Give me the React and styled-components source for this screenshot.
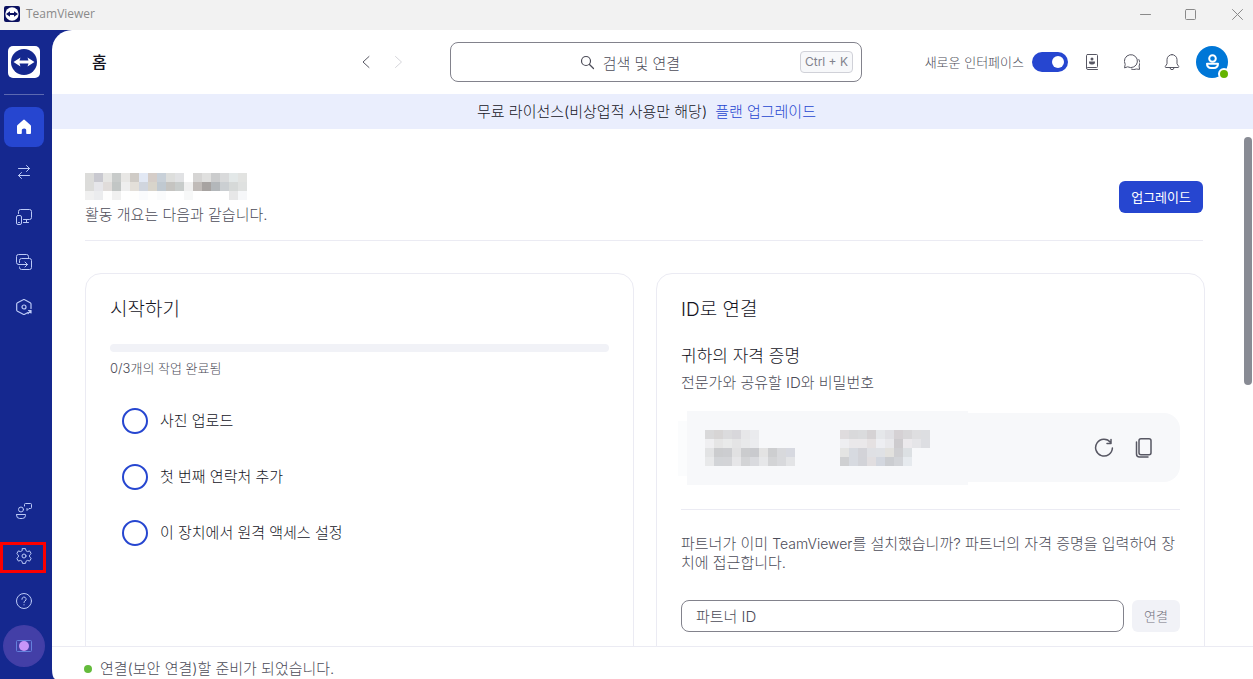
import React, { useState } from 'react';
import styled, { createGlobalStyle, css } from 'styled-components';

const NAME_MASK = [
  'dcdcda c9c9d0 e6e6e4 c8cbca e8e7e5 cfcbc6 e2e8f4 d5cdc8 c8d0d8 dddedc e1e2e4 ffffff d6d5d4 e0e0df cbcccd d9dadb e3e8e8 e2e3e1',
  'dcdcda e6e6ea e0dcda c2c6c5 eeeeee e3dfd9 d0d5de d8d4cb c0c9d1 c5c4c1 c8cccb f0f0f0 c0bbb8 a7a3a1 b3b7ba cbcfd2 d6d9d8 dfe1e0',
  'f0f0f0 ebecee fdfdfd f0f0f0 ffffff fefefd fafbfd fefefe fafbfc ffffff ffffff f7f8f8 ffffff ffffff ffffff ffffff e7e7e8 f6f7f9',
];

const ID_MASK = [
  'd9d9da d7d5d5 dbdbdd d8d7db e7e7e9 eaebee f7f8fa f7f8fa f7f8fa f7f8fa',
  'efeff1 e5e5e5 e9eaea e4e4e5 e8e9ea ebecef f7f8fa f7f8fa f7f8fa f7f8fa',
  'e2e3e4 cbccce cccdd0 e1e1e2 cbccce c9cace e3e3e3 cdced0 d8d9dc d7d9e0',
  'e8e9ea d2d4d7 d3d4d7 e6e6e8 d3d4d6 d9dade e6e7e9 d3d4d6 d8d9dc e3e4e6',
];

const PASSWORD_MASK = [
  'dfdcde d9d9db dadbdd d5d2d4 e5e7ea e0e0e4 d5d1d4 d8d7d9 dedee0 dddee1',
  'eeeef1 eae8ea eae8ea e5e1e2 edeef2 e8e8eb cdcbce ebe9ec e5e5e8 dddee2',
  'e4e4e3 d7dae0 d3d3d8 dfe0e4 dfe1e5 e2e1de cfcfd2 dce0e3 f7f8fa f7f8fa',
  'cfd0d2 d7dae0 d2d3d8 e1dee0 d3d7df cbcdd1 d2d4d8 e6eaee f7f8fa f7f8fa',
];

const STEPS = ['사진 업로드', '첫 번째 연락처 추가', '이 장치에서 원격 액세스 설정'];

const Line = ({ size = 16, children, ...rest }) => (
  <svg
    width={size}
    height={size}
    viewBox={`0 0 ${size} ${size}`}
    fill="none"
    stroke="currentColor"
    strokeLinecap="round"
    strokeLinejoin="round"
    aria-hidden="true"
    {...rest}
  >
    {children}
  </svg>
);

const HomeIcon = () => (
  <svg width="16" height="16" viewBox="0 0 16 16" fill="currentColor" aria-hidden="true">
    <path d="M7.2.9a1.2 1.2 0 0 1 1.6 0l5.6 5c.4.3.6.8.6 1.3v6.6c0 .8-.5 1.2-1.2 1.2h-2.6c-.6 0-1-.4-1-1v-2.7c0-1-.8-1.8-1.8-1.8H8c-1.2 0-2.2.8-2.2 1.8V14c0 .6-.4 1-1 1H2.200C1.500 15 1 14.600 1 13.800V7.200c0-.5.2-1 .6-1.300z" />
  </svg>
);

const TransferIcon = () => (
  <Line>
    <path d="M2.500 4.500h11M10.500 1.500l3 3-3 3M13.500 11.500h-11M5.500 8.500l-3 3 3 3" />
  </Line>
);

const DevicesIcon = () => (
  <Line>
    <path d="M2.500 4.500v-2a2 2 0 0 1 2-2h9a2 2 0 0 1 2 2v6a2 2 0 0 1-2 2h-6M10.500 10.500v3M7.500 13.500h5M2.500 13.500h1" />
    <rect x=".5" y="6.500" width="5" height="9" rx="1.500" />
  </Line>
);

const SessionsIcon = () => (
  <Line>
    <path d="M2.500 10.500a2 2 0 0 1-2-2v-6a2 2 0 0 1 2-2h8a2 2 0 0 1 2 2v1" />
    <path d="M3.500 8.500v-2a2 2 0 0 1 2-2h8a2 2 0 0 1 2 2v7a2 2 0 0 1-2 2h-8a2 2 0 0 1-2-2v-.500M2.500 10.500h9M9 8l2.500 2.500L9 13" />
  </Line>
);

const HexIcon = () => (
  <Line strokeWidth="1.200">
    <path d="M15 9.500V5a1.500 1.500 0 0 0-.8-1.300L8.700.7a1.500 1.500 0 0 0-1.500 0L1.500 3.700A1.500 1.500 0 0 0 .7 5v6c0 .5.300 1 .8 1.300l5.700 3c.5.300 1 .3 1.500 0l3.300-1.800" />
    <circle cx="8" cy="8" r="2" />
    <path d="M12.500 11.500H15V14M15 11.500l-3 3" />
  </Line>
);

const FeedbackIcon = () => (
  <Line>
    <circle cx="5" cy="6.500" r="2.500" />
    <path d="M.5 11.500h9v.8a3.200 3.200 0 0 1-3.200 3.200H3.700A3.200 3.200 0 0 1 .5 12.300z" />
    <path d="M8.500 3V1.500a1 1 0 0 1 1-1h5a1 1 0 0 1 1 1v3a1 1 0 0 1-1 1H13l-2 2v-2" />
  </Line>
);

const GearIcon = () => (
  <Line>
    <circle cx="8" cy="8" r="2" />
    <path d="M6.500.6h3l.5 2.100 1.500.9 2.100-.7 1.600 2.700-1.600 1.500v1.800l1.600 1.500-1.600 2.700-2.100-.7-1.500.9-.5 2.100h-3L6 13.300l-1.500-.9-2.100.7L.8 10.400l1.600-1.500V7.100L.8 5.600l1.600-2.700 2.100.7L6 2.700z" />
  </Line>
);

const HelpIcon = () => (
  <Line>
    <circle cx="8" cy="8" r="7.500" />
    <path d="M5.900 6.300A2.100 2.100 0 1 1 9 8c-.7.400-1 .8-1 1.500M8 11.700v.2" />
  </Line>
);

const ContactsIcon = () => (
  <Line>
    <rect x="2.500" y=".5" width="11" height="13" rx="1" />
    <path d="M2.500 12.500v1.500a1.500 1.500 0 0 0 1.500 1.500h9.500" />
    <circle cx="8" cy="5" r="1.500" fill="currentColor" stroke="none" />
    <path d="M5 7.500h6v.5a2.500 2.500 0 0 1-2.500 2.500h-1A2.500 2.500 0 0 1 5 8z" fill="currentColor" stroke="none" />
  </Line>
);

const ChatIcon = () => (
  <Line>
    <path d="m.6 13.500.6-3.200A6.500 6.500 0 1 1 4 13z" />
    <path d="M14.900 5.500a5.500 5.500 0 0 1 .2 6.500l.5 3.400-3.300-.4a6 6 0 0 1-4.800.2" />
  </Line>
);

const BellIcon = () => (
  <Line>
    <path d="M8 .6a5 5 0 0 0-5 5v4.200L1.400 12.300a.7.700 0 0 0 .6 1.200h12a.7.700 0 0 0 .6-1.200L13 9.800V5.600a5 5 0 0 0-5-5zM6 13.700a2 2 0 0 0 4 0" />
  </Line>
);

const PersonIcon = () => (
  <Line strokeWidth="2">
    <circle cx="8.500" cy="4.500" r="3.300" />
    <path d="M3 9.700h11a4 4 0 0 1-4 4.300H7a4 4 0 0 1-4-4.300z" />
  </Line>
);

const RefreshIcon = () => (
  <Line size={20} strokeWidth="1.500">
    <path d="M16.500 4.300A8.400 8.400 0 1 0 18.400 10M17 1.500v4h-4" />
  </Line>
);

const CopyIcon = () => (
  <Line size={20} strokeWidth="1.500">
    <rect x="5" y=".8" width="12" height="16" rx="2" />
    <path d="M2.500 4v12a3 3 0 0 0 3 3H14" />
  </Line>
);

function Mask({ rows, label }) {
  const cells = rows.join(' ').split(' ');
  return (
    <MaskGrid $columns={rows[0].split(' ').length} role="img" aria-label={label}>
      {cells.map((color, i) => (
        <span key={i} style={{ background: `#${color}` }} />
      ))}
    </MaskGrid>
  );
}

function TitleBar() {
  return (
    <Bar>
      <svg width="16" height="16" viewBox="0 0 24 24" aria-hidden="true">
        <rect width="24" height="24" rx="3" fill="#0b1160" />
        <circle cx="12" cy="12" r="10" fill="#fff" />
        <path d="M3 12 9 8v2.600h6V8l6 4-6 4v-2.600H9V16z" fill="#0b1160" />
      </svg>
      <BarTitle>TeamViewer</BarTitle>
      <WindowButton aria-label="최소화">
        <Line size={11}><path d="M.5 5.500h10" /></Line>
      </WindowButton>
      <WindowButton aria-label="최대화">
        <Line size={11}><rect x=".5" y=".5" width="10" height="10" rx="1" /></Line>
      </WindowButton>
      <WindowButton aria-label="닫기">
        <Line size={11}><path d="m.5.5 10 10m0-10-10 10" /></Line>
      </WindowButton>
    </Bar>
  );
}

function Sidebar() {
  return (
    <Side>
      <svg width="32" height="32" viewBox="0 0 32 32" role="img" aria-label="TeamViewer">
        <rect width="32" height="32" rx="5" fill="#fff" />
        <circle cx="16" cy="16" r="13" fill="#15288f" />
        <path d="m5.500 16 7-4.500-1 3h9l-1-3 7 4.500-7 4.500 1-3h-9l1 3z" fill="#fff" />
      </svg>
      <SideRule />
      <SideGroup>
        <SideButton $active aria-label="홈"><HomeIcon /></SideButton>
        <SideButton aria-label="원격 지원"><TransferIcon /></SideButton>
        <SideButton aria-label="장치"><DevicesIcon /></SideButton>
        <SideButton aria-label="세션"><SessionsIcon /></SideButton>
        <SideButton aria-label="관리"><HexIcon /></SideButton>
      </SideGroup>
      <SideGroup $bottom>
        <SideButton aria-label="피드백"><FeedbackIcon /></SideButton>
        <SideButton $marked aria-label="설정"><GearIcon /></SideButton>
        <SideButton aria-label="도움말"><HelpIcon /></SideButton>
        <SideButton $recording aria-label="둘러보기">
          <svg width="16" height="16" viewBox="0 0 16 16" fill="none" aria-hidden="true">
            <rect x=".5" y="2.500" width="15" height="11" rx="1" stroke="#6481dc" />
            <circle cx="8" cy="8" r="5" fill="#c795f8" />
          </svg>
        </SideButton>
      </SideGroup>
    </Side>
  );
}

function Header() {
  const [newUi, setNewUi] = useState(true);
  return (
    <Top>
      <TopSide>
        <PageTitle>홈</PageTitle>
        <Nav>
          <IconButton $small aria-label="뒤로"><Line><path d="m11 2.500-6 5.500 6 5.500" /></Line></IconButton>
          <IconButton $small disabled aria-label="앞으로"><Line><path d="m5.500 2.500 6 5.500-6 5.500" /></Line></IconButton>
        </Nav>
      </TopSide>
      <Search>
        <SearchField>
          <Line strokeWidth="1.200">
            <circle cx="7" cy="7" r="4.500" />
            <path d="m10.500 10.500 4 4" />
          </Line>
          <SearchInput type="text" aria-label="검색 및 연결" placeholder="검색 및 연결" />
        </SearchField>
        <Shortcut>Ctrl + K</Shortcut>
      </Search>
      <TopSide $end>
        <ToggleLabel htmlFor="new-ui">새로운 인터페이스</ToggleLabel>
        <Toggle id="new-ui" type="checkbox" role="switch" checked={newUi} onChange={() => setNewUi(!newUi)} />
        <IconButton aria-label="연락처"><ContactsIcon /></IconButton>
        <IconButton aria-label="채팅"><ChatIcon /></IconButton>
        <IconButton aria-label="알림"><BellIcon /></IconButton>
        <Avatar aria-label="계정"><PersonIcon /></Avatar>
      </TopSide>
    </Top>
  );
}

function StartCard() {
  return (
    <Card>
      <CardTitle>시작하기</CardTitle>
      <Progress role="progressbar" aria-label="시작하기" aria-valuenow={0} aria-valuemin={0} aria-valuemax={3} />
      <ProgressText>0/3개의 작업 완료됨</ProgressText>
      <Steps>
        {STEPS.map((step) => (
          <li key={step}>
            <Step>
              <StepCheck type="checkbox" />
              {step}
            </Step>
          </li>
        ))}
      </Steps>
    </Card>
  );
}

function ConnectCard() {
  return (
    <Card>
      <CardTitle>ID로 연결</CardTitle>
      <SubTitle>귀하의 자격 증명</SubTitle>
      <Muted>전문가와 공유할 ID와 비밀번호</Muted>
      <Credentials>
        <Mask rows={ID_MASK} label="ID" />
        <Mask rows={PASSWORD_MASK} label="비밀번호" />
        <CredentialActions>
          <IconButton aria-label="새로 고침"><RefreshIcon /></IconButton>
          <IconButton aria-label="복사"><CopyIcon /></IconButton>
        </CredentialActions>
      </Credentials>
      <PartnerText>
        파트너가 이미 <Latin>TeamViewer</Latin>를 설치했습니까? 파트너의 자격 증명을 입력하여 장치에 접근합니다.
      </PartnerText>
      <PartnerForm onSubmit={(e) => e.preventDefault()}>
        <PartnerInput type="text" aria-label="파트너 ID" placeholder="파트너 ID" />
        <ConnectButton type="submit" disabled>연결</ConnectButton>
      </PartnerForm>
    </Card>
  );
}

export default function App() {
  return (
    <>
      <GlobalStyle />
      <Window>
        <TitleBar />
        <Body>
          <Sidebar />
          <Main>
            <Header />
            <Banner>
              무료 라이선스(비상업적 사용만 해당)
              <a href="#upgrade">플랜 업그레이드</a>
            </Banner>
            <ScrollArea>
              <Content>
                <Welcome>
                  <div>
                    <Mask rows={NAME_MASK} label="사용자 이름" />
                    <Muted>활동 개요는 다음과 같습니다.</Muted>
                  </div>
                  <UpgradeButton>업그레이드</UpgradeButton>
                </Welcome>
                <Cards>
                  <StartCard />
                  <ConnectCard />
                </Cards>
              </Content>
              <ScrollThumb />
            </ScrollArea>
            <Status>
              <StatusDot />
              연결(보안 연결)할 준비가 되었습니다.
            </Status>
          </Main>
        </Body>
      </Window>
    </>
  );
}

const GlobalStyle = createGlobalStyle`
  *, *::before, *::after {
    box-sizing: border-box;
  }

  body {
    margin: 0;
    font-family: Inter, 'Noto Sans CJK KR', sans-serif;
    font-size: 15px;
    font-weight: 300;
    line-height: 20px;
    color: #14141e;
  }

  h1, h2, h3, p, ul {
    margin: 0;
    padding: 0;
    font-weight: inherit;
  }

  ul {
    list-style: none;
  }

  button, input {
    font: inherit;
    color: inherit;
    padding: 0;
    margin: 0;
    border: 0;
    background: none;
  }

  svg {
    display: block;
    flex: none;
  }
`;

const Window = styled.div`
  height: 100vh;
  display: flex;
  flex-direction: column;
  overflow: hidden;
`;

const Bar = styled.header`
  flex: none;
  height: 30px;
  display: flex;
  align-items: center;
  padding: 0 0 2px 4px;
  background: #f2f2f2;
  color: #8a8a8a;
`;

const BarTitle = styled.span`
  flex: 1;
  padding-left: 6px;
  font-family: 'Open Sans', sans-serif;
  font-size: 12px;
  font-weight: 400;
`;

const WindowButton = styled.button`
  width: 45px;
  height: 28px;
  display: flex;
  align-items: center;
  justify-content: center;

  &:last-child {
    width: 40px;
    padding-left: 8px;
  }
`;

const Body = styled.div`
  flex: 1;
  min-height: 0;
  display: flex;
  background: #15288f;
`;

const Side = styled.nav`
  flex: none;
  width: 52px;
  display: flex;
  flex-direction: column;
  align-items: center;
  padding: 16px 8px 13px 4px;
`;

const SideRule = styled.div`
  width: 40px;
  height: 1px;
  margin: 16px 0 12px;
  background: #5c69b1;
`;

const SideGroup = styled.div`
  display: flex;
  flex-direction: column;
  gap: 5px;
  margin-top: ${({ $bottom }) => ($bottom ? 'auto' : '0')};
`;

const SideButton = styled.button`
  position: relative;
  width: 40px;
  height: 40px;
  display: flex;
  align-items: center;
  justify-content: center;
  border-radius: 8px;
  color: ${({ $active }) => ($active ? '#fff' : '#bccaf7')};
  background: ${({ $active }) => ($active ? '#2646d0' : 'none')};

  ${({ $recording }) =>
    $recording &&
    css`
      border-radius: 50%;
      background: #433fa7;
      box-shadow: 0 0 0 1px #433fa7;
    `}

  ${({ $marked }) =>
    $marked &&
    css`
      &::after {
        content: '';
        position: absolute;
        inset: 6px -2px 3px -4px;
        border: 3px solid #fd0000;
      }
    `}
`;

const Main = styled.main`
  flex: 1;
  min-width: 0;
  display: flex;
  flex-direction: column;
  overflow: hidden;
  background: #fff;
  border-radius: 20px 0 0 3px / 20px 0 0 10px;
`;

const Top = styled.div`
  flex: none;
  height: 64px;
  display: flex;
  align-items: center;
  padding: 0 25px 0 32px;
`;

const TopSide = styled.div`
  flex: 1 1 0;
  display: flex;
  align-items: center;
  gap: 8px;
  justify-content: ${({ $end }) => ($end ? 'flex-end' : 'space-between')};
`;

const PageTitle = styled.h1`
  padding-left: 8px;
  font-size: 16px;
  font-weight: 500;
`;

const Nav = styled.div`
  display: flex;
  gap: 8px;
  margin-right: 40px;
`;

const IconButton = styled.button`
  width: ${({ $small }) => ($small ? '24px' : '32px')};
  height: ${({ $small }) => ($small ? '24px' : '32px')};
  display: flex;
  align-items: center;
  justify-content: center;
  color: #575763;

  &:disabled {
    color: #d5d5da;
  }
`;

const Search = styled.div`
  flex: 0 1 412px;
  height: 40px;
  display: flex;
  align-items: center;
  padding: 0 8px;
  border: 1px solid #82828c;
  border-radius: 8px;
`;

const SearchField = styled.label`
  flex: 1;
  display: flex;
  align-items: center;
  justify-content: center;
  gap: 8px;
  color: #4c4c58;
`;

const SearchInput = styled.input`
  field-sizing: content;
  outline: none;

  &::placeholder {
    color: #4c4c58;
  }
`;

const Shortcut = styled.kbd`
  padding: 0 4px;
  border: 1px solid #d0d1d8;
  border-radius: 4px;
  background: #f7f8fa;
  color: #82828c;
  font-family: Inter, sans-serif;
  font-size: 12px;
  font-weight: 400;
`;

const ToggleLabel = styled.label`
  font-size: 13px;
  color: #4c4c58;
  white-space: nowrap;
`;

const Toggle = styled.input`
  appearance: none;
  flex: none;
  width: 36px;
  height: 20px;
  padding: 4px;
  border-radius: 10px;
  background: #82828c;

  &::before {
    content: '';
    display: block;
    width: 12px;
    height: 12px;
    border-radius: 50%;
    background: #fff;
  }

  &:checked {
    background: #2646d0;
  }

  &:checked::before {
    margin-left: auto;
  }
`;

const Avatar = styled.button`
  position: relative;
  flex: none;
  width: 32px;
  height: 32px;
  display: flex;
  align-items: center;
  justify-content: center;
  border-radius: 50%;
  background: #0077d7;
  color: #fff;

  &::after {
    content: '';
    position: absolute;
    right: -2px;
    bottom: -2px;
    width: 12px;
    height: 12px;
    border: 2px solid #fff;
    border-radius: 50%;
    background: #64b400;
  }
`;

const Banner = styled.div`
  flex: none;
  height: 35px;
  display: flex;
  align-items: center;
  justify-content: center;
  gap: 8px;
  padding-right: 12px;
  background: #eaeefd;

  a {
    color: #2646d0;
    text-decoration: none;
  }
`;

const ScrollArea = styled.div`
  flex: 1;
  min-height: 0;
  display: flex;
  overflow: hidden;
`;

const Content = styled.div`
  flex: 1;
  min-width: 0;
  padding: 44px 39px 32px 33px;
`;

const ScrollThumb = styled.div`
  flex: none;
  width: 8px;
  height: 48%;
  margin: 8px 1px 0 0;
  border-radius: 4px;
  background: #888b94;
`;

const Welcome = styled.section`
  display: flex;
  align-items: flex-start;
  justify-content: space-between;
  margin-right: 2px;
  padding-bottom: 15px;
  border-bottom: 1px solid #ebebf3;
`;

const MaskGrid = styled.div`
  display: grid;
  grid-template-columns: repeat(${({ $columns }) => $columns}, 9px);
  grid-auto-rows: 9px;
`;

const Muted = styled.p`
  padding-top: 5px;
  color: #4c4c58;
`;

const UpgradeButton = styled.button`
  height: 32px;
  margin-top: 8px;
  padding: 0 12px;
  border-radius: 6px;
  background: #2646d0;
  color: #fff;
  font-size: 13px;
  font-weight: 400;
`;

const Cards = styled.div`
  display: grid;
  grid-template-columns: 1fr 1fr;
  gap: 22px;
  margin-top: 32px;
`;

const Card = styled.section`
  min-height: 420px;
  padding: 24px;
  border: 1px solid #ebebf3;
  border-radius: 16px;
`;

const CardTitle = styled.h2`
  font-size: 19px;
  line-height: 24px;
`;

const Progress = styled.div`
  height: 8px;
  margin: 22px 0 6px;
  border-radius: 4px;
  background: #f1f2f7;
`;

const ProgressText = styled.p`
  font-size: 13px;
  color: #4c4c58;
`;

const Steps = styled.ul`
  display: grid;
  gap: 30px;
  padding: 30px 0 0 12px;
`;

const Step = styled.label`
  display: flex;
  align-items: center;
  gap: 12px;
`;

const StepCheck = styled.input`
  appearance: none;
  flex: none;
  width: 26px;
  height: 26px;
  border: 2px solid #2646d0;
  border-radius: 50%;

  &:checked {
    background: #2646d0;
  }
`;

const SubTitle = styled.h3`
  margin-top: 22px;
  font-size: 17px;
  line-height: 24px;
`;

const Credentials = styled.div`
  position: relative;
  height: 69px;
  display: flex;
  align-items: center;
  gap: 45px;
  margin: 20px 0 27px 6px;
  padding: 0 20px 0 18px;
  border-radius: 0 16px 16px 0;
  background: #f7f8fa;

  > * {
    position: relative;
    z-index: 1;
  }

  &::before {
    content: '';
    position: absolute;
    left: 0;
    top: -2px;
    bottom: -3px;
    width: 281px;
    background: #f7f8fa;
  }

  &::after {
    content: '';
    position: absolute;
    left: -9px;
    top: 8px;
    bottom: 6px;
    width: 9px;
    background: #fbfcfd;
  }
`;

const CredentialActions = styled.div`
  display: flex;
  gap: 8px;
  margin-left: auto;
`;

const PartnerText = styled.p`
  padding-top: 24px;
  border-top: 1px solid #ebebf3;
  line-height: 19px;
  color: #4c4c58;
  word-break: break-all;
`;

const Latin = styled.span`
  font-size: 14px;
`;

const PartnerForm = styled.form`
  display: flex;
  gap: 8px;
  margin-top: 28px;
`;

const PartnerInput = styled.input`
  flex: 1;
  min-width: 0;
  height: 32px;
  padding: 0 14px;
  border: 1px solid #82828c;
  border-radius: 8px;

  &::placeholder {
    color: #4c4c58;
  }
`;

const ConnectButton = styled.button`
  width: 48px;
  border-radius: 6px;
  background: #f1f2f7;
  color: #757580;
  font-size: 13px;
`;

const Status = styled.footer`
  flex: none;
  height: 33px;
  display: flex;
  align-items: center;
  gap: 8px;
  padding: 12px 32px 0;
  border-top: 1px solid #ebebf3;
  color: #4c4c58;
`;

const StatusDot = styled.span`
  width: 8px;
  height: 8px;
  border-radius: 50%;
  background: #64bb3c;
`;
